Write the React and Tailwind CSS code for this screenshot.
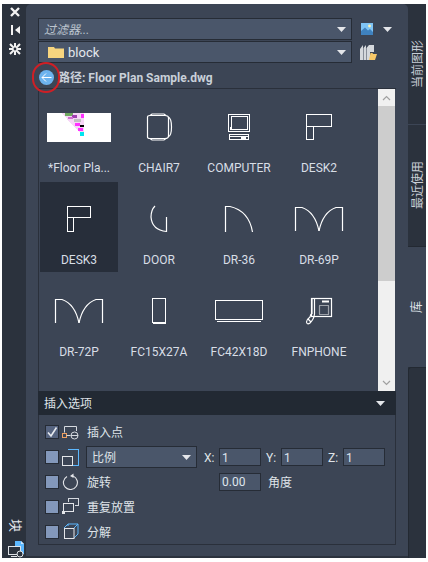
const FONT = "font-['Roboto','Noto_Sans_CJK_SC',sans-serif]";

const s = { fill: "none", stroke: "#fff", strokeWidth: 1.2 };

function Chair() {
  return (
    <g {...s}>
      <path d="M20.5 15 Q20.5 13.5 23 13.5 L38 13.5 Q41.5 13.5 41.5 16 L41.5 34 Q41.5 36.5 38 36.5 L23 36.5 Q20.5 36.5 20.5 35 Z" />
      <path d="M23 13.5 L25 12 L37 12 L39 13.5 M23 36.5 L25 38 L37 38 L39 36.5 M41 15 Q44.5 16 44.5 25 Q44.5 34 41 35" />
    </g>
  );
}
function Computer() {
  return (
    <g {...s} shapeRendering="crispEdges">
      <rect x="21.5" y="12.5" width="21" height="17" />
      <path d="M24.5 14.5 H40.5 V27.5 H24 Z" />
      <path d="M24 29.5 H40" />
      <rect x="22.5" y="32.5" width="19" height="5" />
      <path d="M23 34.5 H41 M34 36 H39" />
    </g>
  );
}
const Desk2 = () => (
  <g {...s} shapeRendering="crispEdges">
    <rect x="19.5" y="12.5" width="25" height="12" />
    <rect x="19.5" y="24.5" width="7" height="13" />
  </g>
);
const Desk3 = () => (
  <g {...s} shapeRendering="crispEdges">
    <rect x="20.5" y="12.5" width="23" height="11" />
    <rect x="20.5" y="23.5" width="6" height="14" />
  </g>
);
const Door = () => (
  <g {...s}>
    <path d="M28 12 Q24 16 24 23 Q25 36 39.5 37.5" />
    <path d="M39.5 23 V38" />
  </g>
);
const Dr36 = () => (
  <g {...s}>
    <path d="M18.5 38 V12.5 H23 Q42 17 45.5 38" />
  </g>
);
const DoubleDoor = () => (
  <g {...s}>
    <path d="M8.5 37 V13.5 H15 Q28 18 32 37" />
    <path d="M55.5 37 V13.5 H49 Q36 18 32 37" />
  </g>
);
const Fc15 = () => (
  <g {...s} shapeRendering="crispEdges">
    <rect x="25.5" y="12.5" width="13" height="24" />
    <path d="M25.5 37.5 H38.5" />
  </g>
);
const Fc42 = () => (
  <g {...s} shapeRendering="crispEdges">
    <rect x="8.5" y="14.5" width="47" height="19" />
    <path d="M10 35.5 H54" />
  </g>
);
const Phone = () => (
  <g {...s}>
    <rect x="24.5" y="12.5" width="20" height="18" />
    <rect x="32.5" y="19.5" width="9" height="9" strokeDasharray="1 1" />
    <path d="M35 15.5 H42" strokeWidth="2" />
    <path d="M25 13 V28 M27.5 13 V28 Q27 33 23 37 Q20 39 19.5 36 Q20 33 23 31 L24 28" />
    <path d="M21 33 L24 36" />
  </g>
);
const Thumb = () => (
  <g shapeRendering="crispEdges">
    <rect x="0" y="11" width="64" height="29" fill="#fff" />
    <path d="M15 11 H37 V33 H35 L26 24 Z" fill="#f6d6f6" />
    <rect x="18" y="11" width="8" height="3" fill="#6fa860" />
    <rect x="25" y="13" width="5" height="3" fill="#a040b0" />
    <rect x="21" y="15" width="5" height="2" fill="#d070d0" />
    <rect x="27" y="17" width="7" height="3" fill="#c0c0c0" />
    <rect x="28" y="21" width="5" height="3" fill="#ff30ff" />
    <rect x="33" y="23" width="4" height="2" fill="#000" />
    <rect x="31" y="26" width="5" height="3" fill="#ff30ff" />
    <rect x="33" y="30" width="4" height="4" fill="#00e5f0" />
    <rect x="34" y="12" width="3" height="4" fill="#ff30ff" />
  </g>
);

const items = [
  ["*Floor Pla...", Thumb],
  ["CHAIR7", Chair],
  ["COMPUTER", Computer],
  ["DESK2", Desk2],
  ["DESK3", Desk3, true],
  ["DOOR", Door],
  ["DR-36", Dr36],
  ["DR-69P", DoubleDoor],
  ["DR-72P", DoubleDoor],
  ["FC15X27A", Fc15],
  ["FC42X18D", Fc42],
  ["FNPHONE", Phone],
];

function Arrow({ className = "" }) {
  return (
    <svg width="9" height="5" viewBox="0 0 9 5" className={className}>
      <path d="M0 0 H9 L4.5 5 Z" fill="#e4e6ea" />
    </svg>
  );
}

function Check({ checked }) {
  return (
    <div className={`flex h-[14px] w-[14px] shrink-0 items-center justify-center border border-[#262c36] ${checked ? "bg-[#566480]" : "bg-[#8398bb]"}`}>
      {checked && (
        <svg width="12" height="12" viewBox="0 0 12 12">
          <path d="M2 6.5 L5 10 L10.5 1.5" fill="none" stroke="#e8ebef" strokeWidth="1.6" />
        </svg>
      )}
    </div>
  );
}

function OptIcon({ kind }) {
  return (
    <svg width="17" height="17" viewBox="0 0 17 17" className="ml-[3px] shrink-0" fill="none" strokeWidth="1" shapeRendering={kind === "rot" ? "auto" : "crispEdges"}>
      {kind === "pt" && (
        <g shapeRendering="auto">
          <path d="M2.5 8.5 V2.5 H14.5 V7" stroke="#d6dae0" />
          <rect x="0.5" y="9.5" width="4" height="4" stroke="#f0a060" />
          <path d="M4.5 11.5 H8.5" stroke="#d6dae0" />
          <circle cx="12.5" cy="11.5" r="3.5" stroke="#d6dae0" />
          <path d="M9 11.5 H16" stroke="#d6dae0" />
        </g>
      )}
      {kind === "scale" && (
        <g>
          <path d="M5.5 0.5 H16.5 V16.5 H11" stroke="#5db8ff" />
          <rect x="0.5" y="7.5" width="10" height="9" stroke="#e4e6ea" />
        </g>
      )}
      {kind === "rot" && (
        <g>
          <path d="M11 3 A7 7 0 1 1 5 3.4" stroke="#e4e6ea" strokeWidth="1.1" />
          <path d="M8 3 L11.5 0.5 L11.5 5 Z" fill="#e4e6ea" />
        </g>
      )}
      {kind === "rep" && (
        <g>
          <path d="M6.5 3.5 V0.5 H16.5 V7.5 H13" stroke="#d6dae0" />
          <rect x="1.5" y="5.5" width="10" height="8" stroke="#e4e6ea" />
          <rect x="0" y="13" width="3" height="3" fill="#e4e6ea" />
        </g>
      )}
      {kind === "exp" && (
        <g shapeRendering="auto">
          <path d="M2 5 L6 1 H16 V11 L12 15" stroke="#5db8ff" />
          <path d="M12 5 L16 1 M6 1 V3" stroke="#5db8ff" />
          <rect x="2.5" y="5.5" width="9.5" height="10" stroke="#e4e6ea" />
        </g>
      )}
    </svg>
  );
}

function Num({ value }) {
  return (
    <div className="flex h-[18px] w-[42px] shrink-0 items-center border border-[#262c36] bg-[#4a566a] pl-[2px] pt-[1px] text-[12px] text-[#dfe5ec]">
      {value}
    </div>
  );
}

function VTab({ text, className = "" }) {
  return (
    <div className={`flex items-center justify-center text-[12px] leading-none text-[#c9ced6] ${className}`}>
      <span className="rotate-180 [text-orientation:sideways] [writing-mode:vertical-rl]">{text}</span>
    </div>
  );
}

export default function App() {
  return (
    <div className={`h-[562px] w-[428px] bg-white pb-[4px] pl-[2px] pr-[2px] pt-[4px] ${FONT}`}>
      <div className="flex h-full w-full bg-[#2b323d]">
        {/* left strip */}
        <div className="flex w-[24px] shrink-0 flex-col items-center">
          <svg width="12" height="12" viewBox="0 0 12 12" className="mt-[2px] ml-[2px]">
            <path d="M2 2 L10 10 M10 2 L2 10" stroke="#f2f2f2" strokeWidth="2.4" />
          </svg>
          <svg width="12" height="10" viewBox="0 0 12 10" className="mt-[7px] ml-[2px]">
            <path d="M2 0 H4 V10 H2 Z M11 1 V9 L6 5 Z" fill="#f2f2f2" />
          </svg>
          <svg width="12" height="12" viewBox="0 0 12 12" className="mt-[8px] ml-[2px]">
            <path d="M1 1 L11 11 M11 1 L1 11 M6 0 V12 M0 6 H12" stroke="#f2f2f2" strokeWidth="2" />
            <circle cx="6" cy="6" r="1.4" fill="#2b323d" />
          </svg>
          <div className="mt-auto mb-[9px] ml-[4px] rotate-90 text-[13px] leading-none text-[#e4e8ee]">块</div>
          <svg width="18" height="17" viewBox="0 0 18 17" className="mb-0 ml-[4px]">
            <path d="M8 0 H14 L17 3 V13 H8 Z" fill="#5db8ff" />
            <path d="M14 0 V3 H17" fill="#cfe8ff" />
            <rect x="1.5" y="5.5" width="12" height="8" fill="#2b323d" stroke="#dfe2e6" />
            <circle cx="13" cy="13" r="3" fill="#2b323d" stroke="#dfe2e6" />
            <path d="M4 15.5 H10" stroke="#dfe2e6" />
          </svg>
        </div>

        {/* main */}
        <div className="flex h-[552px] w-[382px] shrink-0 flex-col rounded-t-[5px] bg-[#3c4555] pl-[12px] pr-[12px] pt-[14px]">
          <div className="flex h-[22px] items-center">
            <div className="flex h-[22px] w-[314px] items-center justify-between border border-[#262c36] bg-[#4a566a] pl-[5px] pr-[5px]">
              <span className="pt-[1px] text-[12px] italic text-[#bcc4ce]">过滤器...</span>
              <Arrow />
            </div>
            <svg width="12" height="12" viewBox="0 0 12 12" className="ml-[9px]" shapeRendering="crispEdges">
              <rect width="12" height="12" fill="#7fc4f5" />
              <path d="M0 12 V8 L4 4.5 L7 7.5 L9 6 L12 9 V12 Z" fill="#3f82bf" shapeRendering="auto" />
              <circle cx="8.5" cy="3" r="1.4" fill="#fff3b0" shapeRendering="auto" />
            </svg>
            <Arrow className="ml-[10px]" />
          </div>
          <div className="mt-[1px] flex h-[22px] items-center">
            <div className="flex h-[22px] w-[314px] items-center border border-[#262c36] bg-[#4a566a] pl-[9px] pr-[5px]">
              <svg width="16" height="12" viewBox="0 0 16 12">
                <path d="M0 1 H6 L7 2.5 H16 V12 H0 Z" fill="#f7d57f" />
              </svg>
              <span className="ml-[4px] pt-[1px] text-[13px] text-[#e4e8ee]">block</span>
              <Arrow className="ml-auto" />
            </div>
            <svg width="17" height="17" viewBox="0 0 17 17" className="ml-[8px]">
              <path d="M0 16 V5 L3 1 V16 Z M3.5 16 V4 L6 1 V16 Z M6.5 16 V4 L9 1 H14 V8 H10 V16 Z" fill="#d5d8dc" />
              <path d="M9 16 L10.5 9 H12.5 L13 10 H17 L15 16 Z" fill="#f7c868" />
            </svg>
          </div>

          {/* path row */}
          <div className="relative mt-[4px] flex h-[21px] items-center">
            <div className="ml-[1px] flex h-[15px] w-[15px] shrink-0 items-center justify-center rounded-full bg-[#6db3ef]">
              <svg width="11" height="11" viewBox="0 0 11 11">
                <path d="M10.5 5.5 H1 M5 1.5 L1 5.5 L5 9.5" fill="none" stroke="#fff" strokeWidth="1" />
              </svg>
            </div>
            <span className="ml-[4px] text-[12px] font-bold text-[#c9d0d9]">路径: Floor Plan Sample.dwg</span>
            <div className="absolute left-[-6px] top-[-5px] h-[31px] w-[28px] rounded-full border-2 border-[#cf1f25]" />
          </div>

          {/* list */}
          <div className="flex h-[303px] w-[358px] border-l border-t border-[#2a303b]">
            <div className="w-[339px] pl-[1px] pt-[1px]">
              <div className="grid grid-cols-[78px_78px_78px_78px] auto-rows-[90px] gap-x-[2px] gap-y-[2px]">
                {items.map(([label, Icon, sel]) => (
                  <div key={label} className={`flex flex-col items-center ${sel ? "bg-[#272e3a]" : ""}`}>
                    <svg width="64" height="50" viewBox="0 0 64 50" className="mt-[12px] shrink-0">
                      <Icon />
                    </svg>
                    <div className="mt-[7px] h-[18px] whitespace-nowrap text-[12px] leading-[18px] text-[#d8dee6]">{label}</div>
                  </div>
                ))}
              </div>
            </div>
            <div className="flex h-full w-[17px] shrink-0 flex-col bg-[#f0f0f0]">
              <div className="flex h-[17px] items-center justify-center">
                <svg width="9" height="6" viewBox="0 0 9 6">
                  <path d="M1 5 L4.5 1.5 L8 5" fill="none" stroke="#a0a0a0" strokeWidth="1.2" />
                </svg>
              </div>
              <div className="h-[175px] bg-[#cdcdcd]" />
              <div className="mt-auto flex h-[17px] items-center justify-center">
                <svg width="9" height="6" viewBox="0 0 9 6">
                  <path d="M1 1 L4.5 4.5 L8 1" fill="none" stroke="#a0a0a0" strokeWidth="1.2" />
                </svg>
              </div>
            </div>
          </div>

          {/* insert options */}
          <div className="flex h-[24px] w-[358px] items-center justify-between bg-[#222933] pl-[6px] pr-[11px]">
            <span className="pt-[1px] text-[12px] text-[#dfe3e8]">插入选项</span>
            <Arrow />
          </div>
          <div className="flex h-[130px] w-[358px] flex-col border-b border-l border-r border-[#2a303b] pl-[6px] pt-[5px] text-[12px] text-[#dfe3e8]">
            <div className="flex h-[25px] items-center">
              <Check checked />
              <OptIcon kind="pt" />
              <span className="ml-[8px] pt-[1px]">插入点</span>
            </div>
            <div className="flex h-[25px] items-center">
              <Check />
              <OptIcon kind="scale" />
              <div className="ml-[7px] flex h-[22px] w-[111px] shrink-0 items-center justify-between border border-[#262c36] bg-[#4a566a] pl-[5px] pr-[5px]">
                <span className="pt-[1px]">比例</span>
                <Arrow />
              </div>
              <span className="ml-[7px] w-[15px] pt-[1px]">X:</span>
              <Num value="1" />
              <span className="ml-[5px] w-[15px] pt-[1px]">Y:</span>
              <Num value="1" />
              <span className="ml-[5px] w-[15px] pt-[1px]">Z:</span>
              <Num value="1" />
            </div>
            <div className="flex h-[25px] items-center">
              <Check />
              <OptIcon kind="rot" />
              <span className="ml-[8px] w-[132px] shrink-0 pt-[2px]">旋转</span>
              <Num value="0.00" />
              <span className="ml-[7px] pt-[2px]">角度</span>
            </div>
            <div className="flex h-[25px] items-center">
              <Check />
              <OptIcon kind="rep" />
              <span className="ml-[8px] pt-[3px]">重复放置</span>
            </div>
            <div className="flex h-[25px] items-center">
              <Check />
              <OptIcon kind="exp" />
              <span className="ml-[8px] pt-[3px]">分解</span>
            </div>
          </div>
        </div>

        {/* right tabs */}
        <div className="flex h-full w-[18px] shrink-0 flex-col">
          <VTab text="当前图形" className="h-[121px] border-b border-[#3c4555] pl-[2px]" />
          <VTab text="最近使用" className="h-[122px] border-b border-[#232932] pl-[2px]" />
          <VTab text="库" className="h-[120px] bg-[#3c4555] text-[#dfe3e8]" />
          <div className="flex-1 rounded-tl-[3px] border-l border-t border-[#232932] bg-[#2b323d]" />
        </div>
      </div>
    </div>
  );
}
